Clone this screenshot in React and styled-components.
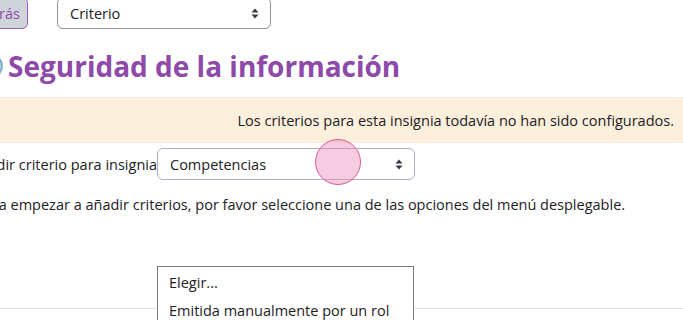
import React from "react";
import styled, { createGlobalStyle } from "styled-components";

const Global = createGlobalStyle`
  html, body { margin: 0; padding: 0; background: #fff; overflow: hidden; }
  body { font-family: "Open Sans", "DejaVu Sans", sans-serif; color: #1d2125; }
`;

const Viewport = styled.div`
  position: relative;
  width: 683px;
  height: 320px;
  overflow: hidden;
`;

const Page = styled.div`
  margin-left: -24px;
  margin-top: -3px;
  display: flex;
  flex-direction: column;
`;

const Toolbar = styled.div`
  display: flex;
  align-items: center;
  gap: 29px;
  height: 32px;
`;

const BackButton = styled.button`
  margin-left: -2px;
  width: 54px;
  height: 32px;
  border: 1px solid #9b5fb6;
  border-radius: 6px;
  background: #ced4da;
  color: #8e4aa8;
  font: 400 14.5px "Open Sans", sans-serif;
  text-align: right;
  padding: 0 7px;
`;

const Select = styled.div`
  box-sizing: border-box;
  flex: none;
  width: ${(p) => p.$w}px;
  height: 32px;
  border: 1px solid ${(p) => p.$border};
  border-radius: 6px;
  display: flex;
  align-items: center;
  justify-content: space-between;
  padding: 0 11px 0 12px;
  font-size: 14.5px;
  color: #1d2125;
  background: #fff;
`;

const Arrows = () => (
  <svg width="8" height="11" viewBox="0 0 8 11">
    <path d="M4 0.5 L7.5 4.5 H0.5 Z M4 10.5 L7.5 6.5 H0.5 Z" fill="#343a40" />
  </svg>
);

const Heading = styled.h2`
  margin: 16px 0 0 0;
  display: flex;
  align-items: center;
  gap: 5px;
  font: 700 28px "Open Sans", sans-serif;
  color: #8e4aa8;
  height: 42px;
`;

const BadgeIcon = styled.span`
  width: 22px;
  height: 22px;
  border-radius: 50%;
  background: #bcd3e0;
  border: 2px solid #7fb0cf;
  margin-left: 1px;
  flex: none;
`;

const Alert = styled.div`
  margin: 10px 0 0 0;
  height: 46px;
  background: #fcefdc;
  display: flex;
  align-items: center;
  justify-content: flex-end;
  padding-right: 9px;
  font-size: 14.5px;
`;

const Row = styled.div`
  margin-top: 5px;
  display: flex;
  align-items: center;
`;

const Label = styled.label`
  flex: none;
  width: 181px;
  display: flex;
  justify-content: flex-end;
  white-space: nowrap;
  font-size: 14.5px;
`;

const Help = styled.p`
  margin: 15px 0 0 0;
  font-size: 14.5px;
  line-height: 20px;
  white-space: nowrap;
`;

const Rule = styled.hr`
  margin: 93px 0 0 0;
  border: 0;
  border-top: 1px solid #dee2e6;
  width: 760px;
`;

const Touch = styled.div`
  position: absolute;
  left: 315px;
  top: 139px;
  width: 44px;
  height: 44px;
  border-radius: 50%;
  background: rgba(232, 130, 178, 0.4);
  border: 1.5px solid #e0569a;
`;

const Menu = styled.ul`
  position: absolute;
  left: 157px;
  top: 266px;
  width: 257px;
  margin: 0;
  padding: 2px 0;
  list-style: none;
  background: #fff;
  border: 1px solid #7a7a7a;
  box-sizing: border-box;
`;

const MenuItem = styled.li`
  height: 28px;
  line-height: 28px;
  padding-left: 11px;
  font-size: 14.5px;
  color: #1d2125;
`;

export default function App() {
  return (
    <Viewport>
      <Global />
      <Page>
        <Toolbar>
          <BackButton>Atrás</BackButton>
          <Select $w={214} $border="#8f959e">
            Criterio <Arrows />
          </Select>
        </Toolbar>
        <Heading>
          <BadgeIcon />
          Seguridad de la información
        </Heading>
        <Alert>Los criterios para esta insignia todavía no han sido configurados.</Alert>
        <Row>
          <Label>Añadir criterio para insignia</Label>
          <Select $w={258} $border="#b5a9cc">
            Competencias <Arrows />
          </Select>
        </Row>
        <Help>
          Para empezar a añadir criterios, por favor seleccione una de las opciones del menú desplegable.
        </Help>
        <Rule />
      </Page>
      <Touch />
      <Menu>
        <MenuItem>Elegir...</MenuItem>
        <MenuItem>Emitida manualmente por un rol</MenuItem>
      </Menu>
    </Viewport>
  );
}
